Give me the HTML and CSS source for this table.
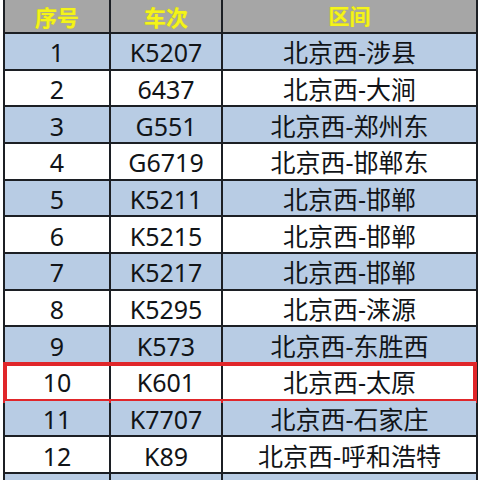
FILE: index.html
```html
<!DOCTYPE html>
<html lang="zh-CN">
<head>
<meta charset="utf-8">
<title>列车表</title>
<link rel="stylesheet" href="styles.css">
</head>
<body>
<div class="table">
  <div class="row head"><div class="c1">序号</div><div class="c2">车次</div><div class="c3">区间</div></div>
  <div class="row blue"><div class="c1">1</div><div class="c2">K5207</div><div class="c3">北京西-涉县</div></div>
  <div class="row"><div class="c1">2</div><div class="c2">6437</div><div class="c3">北京西-大涧</div></div>
  <div class="row blue"><div class="c1">3</div><div class="c2">G551</div><div class="c3">北京西-郑州东</div></div>
  <div class="row"><div class="c1">4</div><div class="c2">G6719</div><div class="c3">北京西-邯郸东</div></div>
  <div class="row blue"><div class="c1">5</div><div class="c2">K5211</div><div class="c3">北京西-邯郸</div></div>
  <div class="row"><div class="c1">6</div><div class="c2">K5215</div><div class="c3">北京西-邯郸</div></div>
  <div class="row blue"><div class="c1">7</div><div class="c2">K5217</div><div class="c3">北京西-邯郸</div></div>
  <div class="row"><div class="c1">8</div><div class="c2">K5295</div><div class="c3">北京西-涞源</div></div>
  <div class="row blue"><div class="c1">9</div><div class="c2">K573</div><div class="c3">北京西-东胜西</div></div>
  <div class="row marked"><div class="c1">10</div><div class="c2">K601</div><div class="c3">北京西-太原</div></div>
  <div class="row blue"><div class="c1">11</div><div class="c2">K7707</div><div class="c3">北京西-石家庄</div></div>
  <div class="row"><div class="c1">12</div><div class="c2">K89</div><div class="c3">北京西-呼和浩特</div></div>
  <div class="row blue"><div class="c1"></div><div class="c2"></div><div class="c3"></div></div>
</div>
</body>
</html>
```
FILE: styles.css
```css
html, body {
  margin: 0;
  padding: 0;
  background: #ffffff;
  overflow: hidden;
  width: 480px;
  height: 480px;
}

.table {
  margin-left: 3px;
  width: 471px;
  padding: 0 2px;
  display: flex;
  flex-direction: column;
  gap: 2px;
  background: #1c1f24;
  font-family: "Noto Sans", "Noto Sans CJK SC", sans-serif;
  color: #111418;
}

.row {
  display: flex;
  gap: 2px;
  height: 34.67px;
  position: relative;
}

.row > div {
  background: #ffffff;
  display: flex;
  align-items: center;
  justify-content: center;
  font-size: 25px;
  line-height: 1;
  padding-top: 3px;
  box-sizing: border-box;
}

.c1 { width: 104px; }
.c2 { width: 110px; }
.c3 { width: 253px; }

.row.blue > div {
  background: #b8cce4;
}

.row.head {
  height: 32px;
}

.row.head > div {
  background: #a6a6a6;
  color: #f4f41a;
  font-family: "Noto Sans CJK SC", sans-serif;
  font-weight: 700;
  font-size: 22px;
  line-height: 1.1;
  padding-top: 0;
  padding-bottom: 0;
  text-shadow: 0 0 1px #c8c800;
}

.row.head > .c3 {
  font-size: 21px;
}

.row.marked::after {
  content: "";
  position: absolute;
  top: -2px;
  bottom: -4px;
  left: -2px;
  right: -1px;
  border: 4px solid #e0262a;
  pointer-events: none;
}
```
